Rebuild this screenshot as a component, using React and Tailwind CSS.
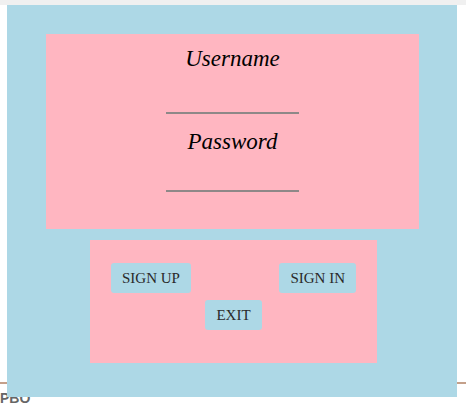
import React from 'react'

const serif = { fontFamily: '"Liberation Serif", "Times New Roman", serif' }

function Field({ label, gap, h }) {
  return (
    <div className="flex flex-col items-center">
      <div className="text-[23px] italic leading-[26px] text-black" style={{ ...serif, marginTop: gap }}>
        {label}
      </div>
      <input
        className="w-[133px] border-b-2 border-[#8e8888] bg-transparent outline-none"
        style={{ height: h }}
      />
    </div>
  )
}

function Btn({ children }) {
  return (
    <button className="h-[30px] rounded-[3px] bg-[#add8e6] px-[11px] text-[15px] text-[#2a2a2a]" style={serif}>
      {children}
    </button>
  )
}

export default function App() {
  return (
    <div className="relative h-[403px] w-[466px] overflow-hidden bg-white">
      <div className="h-[5px] w-full bg-[#f0f0f0]" />
      <div className="absolute left-0 top-[382px] h-[2px] w-full bg-[#c4a08a]" />
      <div className="absolute left-0 top-[388px] text-[14px] font-bold text-[#666]" style={{ fontFamily: '"Liberation Sans", sans-serif' }}>PBO</div>
      <div className="relative ml-[7px] h-[392px] w-[450px] bg-[#add8e6] pt-[29px]">
        <div className="ml-[39px] h-[195px] w-[373px] bg-[#ffb6c1] pt-[12px]">
          <Field label="Username" gap={0} h={42} />
          <Field label="Password" gap={15} h={37} />
        </div>
        <div className="ml-[83px] mt-[11px] flex h-[123px] w-[287px] flex-col bg-[#ffb6c1] px-[21px] pt-[23px]">
          <div className="flex justify-between">
            <Btn>SIGN UP</Btn>
            <Btn>SIGN IN</Btn>
          </div>
          <div className="mt-[7px] flex justify-center">
            <Btn>EXIT</Btn>
          </div>
        </div>
      </div>
    </div>
  )
}
